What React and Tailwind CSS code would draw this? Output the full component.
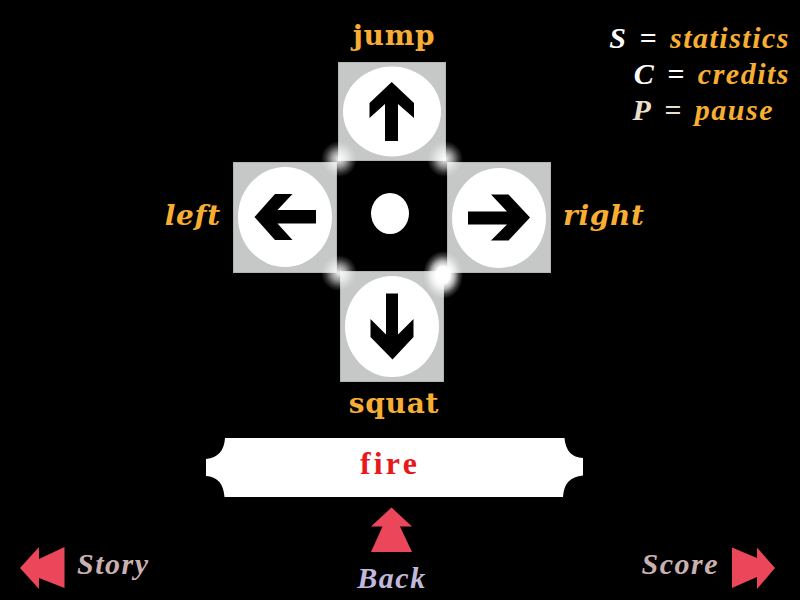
const labelClass =
  "font-['DejaVu_Serif',serif] text-[28px] leading-9 font-bold tracking-wide text-[#f7ae33]";
const navClass =
  "text-[30px] leading-9 font-bold italic tracking-wider";

function PadKey({ label, viewBox, ellipse, arrow, className }) {
  return (
    <button type="button" aria-label={label} className={`block border border-[#b3b5b4] bg-[#c6c8c7] ${className}`}>
      <svg viewBox={viewBox} className="block h-full w-full" aria-hidden="true">
        <ellipse cx={ellipse[0]} cy={ellipse[1]} rx={ellipse[2]} ry={ellipse[3]} fill="#fff" />
        <polygon points={arrow} fill="#000" />
      </svg>
    </button>
  );
}

function Glow({ className }) {
  return (
    <span
      className={`pointer-events-none absolute rounded-full ${className}`}
      aria-hidden="true"
    />
  );
}

const softGlow =
  "size-9 bg-[radial-gradient(closest-side,rgba(255,255,255,0.95),rgba(255,255,255,0.6)_40%,rgba(255,255,255,0.2)_75%,transparent)]";
const brightGlow =
  "h-12 w-10 bg-[radial-gradient(closest-side,#fff_35%,rgba(255,255,255,0.7)_58%,rgba(255,255,255,0.25)_80%,transparent)]";

function Shortcut({ letter, name, tone, className }) {
  return (
    <div className={`flex justify-end gap-3 ${className}`}>
      <dt className={`flex gap-3 ${tone}`}>
        <span>{letter}</span>
        <span>=</span>
      </dt>
      <dd className="text-[#f7ae33]">{name}</dd>
    </div>
  );
}

export default function App() {
  return (
    <main className="flex min-h-screen flex-col bg-black font-['Liberation_Serif',serif]">
      <section className="grid grid-cols-[1fr_104px_110px_104px_1fr] grid-rows-[62px_99px_110px_111px_auto] pr-4">
        <span className={`col-start-3 row-start-1 self-end justify-self-center pb-2 pl-1 ${labelClass}`}>jump</span>

        <dl className="col-start-5 row-span-2 row-start-1 -mr-1.5 pt-5 text-[30px] leading-9 font-bold tracking-wider whitespace-nowrap italic">
          <Shortcut letter="S" name="statistics" tone="text-white" className="" />
          <Shortcut letter="C" name="credits" tone="text-white" className="" />
          <Shortcut letter="P" name="pause" tone="text-[#eadfce]" className="pr-4" />
        </dl>

        <PadKey
          label="jump"
          className="col-start-3 row-start-2 w-[108px] justify-self-center"
          viewBox="339 63 106 97"
          ellipse={[392, 111.5, 49, 45]}
          arrow="391.7,82 414,103 414,118 398,104 398,141 385,141 385,104 369.5,118 369.5,103"
        />

        <span className={`col-start-1 row-start-3 self-center justify-self-end pr-3 italic ${labelClass}`}>left</span>
        <PadKey
          label="left"
          className="col-start-2 row-start-3 mt-px -mb-0.5"
          viewBox="234 163 102 109"
          ellipse={[285, 217, 47, 50]}
          arrow="254.5,217 275,194 292.5,194 277.5,210 316,210 316,223.5 277.5,223.5 292.5,240 275,240"
        />
        <div className="relative col-start-3 row-start-3 flex items-center justify-center pb-1.5">
          <span className="mr-1 h-[41px] w-[38px] rounded-[50%] bg-white" />
          <Glow className={`-top-5 -left-4 ${softGlow}`} />
          <Glow className={`-top-5 -right-4 ${softGlow}`} />
          <Glow className={`-bottom-5 -left-4 ${softGlow}`} />
          <Glow className={`-right-4 -bottom-7 z-10 ${brightGlow}`} />
        </div>
        <PadKey
          label="right"
          className="col-start-4 row-start-3 mt-px -mb-0.5"
          viewBox="448 163 102 109"
          ellipse={[499, 218, 47, 50]}
          arrow="530,217.5 508.5,194.5 491,194.5 507,211.5 468,211.5 468,224.5 507,224.5 491,240.5 508.5,240.5"
        />
        <span className={`col-start-5 row-start-3 self-center pl-3 italic ${labelClass}`}>right</span>

        <PadKey
          label="squat"
          className="col-start-3 row-start-4 w-[104px] justify-self-center"
          viewBox="340 272 102 109"
          ellipse={[391, 326.5, 47, 50.5]}
          arrow="391.5,359.5 412.5,337 412.5,319 397,334.5 397,293.5 385,293.5 385,334.5 369.5,319 369.5,337"
        />
        <span className={`col-start-3 row-start-5 justify-self-center pt-1 pl-1 ${labelClass}`}>squat</span>
      </section>

      <div className="mt-4 flex justify-center pr-3">
        <button type="button" className="grid place-items-center text-[32px] leading-9 font-bold tracking-widest text-[#e8191c]">
          <svg viewBox="0 0 377 59" className="col-start-1 row-start-1 h-[59px] w-[377px]" aria-hidden="true">
            <path
              d="M19 0H358.500Q360 19 377 20V37.500Q358 39 357 59H18.500Q17 39 0 38V21Q18 19 19 0Z"
              fill="#fff"
            />
          </svg>
          <span className="col-start-1 row-start-1 pr-2 pb-2.5">fire</span>
        </button>
      </div>

      <nav className="grid grid-cols-[1fr_auto_1fr] items-end pt-2.5 pr-6 pb-1 pl-5">
        <button type="button" className={`mb-1.5 flex items-center gap-3 justify-self-start text-[#c9b1b1] ${navClass}`}>
          <svg viewBox="19 547 45 42" className="h-[42px] w-[45px]" fill="#ec465b" aria-hidden="true">
            <polygon points="19,568 38,547 38,559 63.500,547 63.500,588 38,578 38,589" />
          </svg>
          <span className="pb-2">Story</span>
        </button>
        <button type="button" className={`flex flex-col items-center gap-2 pr-3 text-[#c0b9dc] ${navClass}`}>
          <svg viewBox="371 506 41 45" className="h-[45px] w-[41px]" fill="#ec465b" aria-hidden="true">
            <polygon points="391.500,506.500 412,525.500 400,525.500 412,551 371,551 382.500,525.500 371,525.500" />
          </svg>
          <span>Back</span>
        </button>
        <button type="button" className={`mb-1.5 flex items-center gap-3 justify-self-end text-[#c9b1b1] ${navClass}`}>
          <span className="pb-2">Score</span>
          <svg viewBox="730 546 45 42" className="h-[42px] w-[45px]" fill="#ec465b" aria-hidden="true">
            <polygon points="774,567 756,546.500 756,557 731,546.500 731,587 756,576 756,588" />
          </svg>
        </button>
      </nav>
    </main>
  );
}
